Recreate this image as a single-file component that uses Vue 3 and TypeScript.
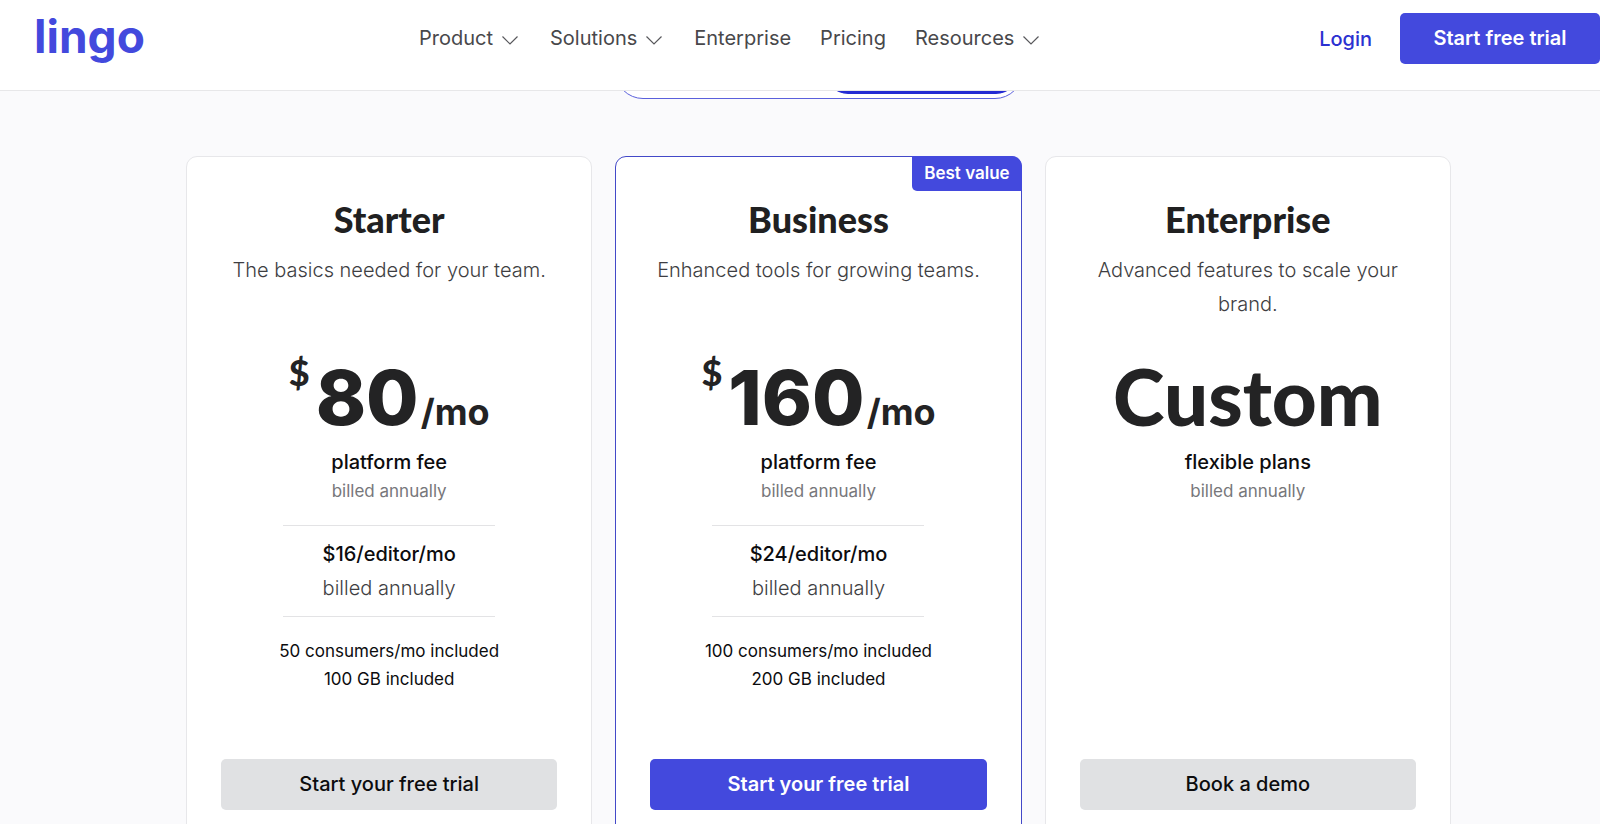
<script setup lang="ts">
interface NavItem {
  label: string
  menu: boolean
}

interface Plan {
  name: string
  description: string
  amount: string
  monthly: boolean
  fee: string
  editor?: string
  included?: string[]
  cta: string
  featured: boolean
}

const nav: NavItem[] = [
  { label: 'Product', menu: true },
  { label: 'Solutions', menu: true },
  { label: 'Enterprise', menu: false },
  { label: 'Pricing', menu: false },
  { label: 'Resources', menu: true },
]

const plans: Plan[] = [
  {
    name: 'Starter',
    description: 'The basics needed for your team.',
    amount: '80',
    monthly: true,
    fee: 'platform fee',
    editor: '$16/editor/mo',
    included: ['50 consumers/mo included', '100 GB included'],
    cta: 'Start your free trial',
    featured: false,
  },
  {
    name: 'Business',
    description: 'Enhanced tools for growing teams.',
    amount: '160',
    monthly: true,
    fee: 'platform fee',
    editor: '$24/editor/mo',
    included: ['100 consumers/mo included', '200 GB included'],
    cta: 'Start your free trial',
    featured: true,
  },
  {
    name: 'Enterprise',
    description: 'Advanced features to scale your brand.',
    amount: 'Custom',
    monthly: false,
    fee: 'flexible plans',
    cta: 'Book a demo',
    featured: false,
  },
]
</script>

<template>
  <div class="page">
    <header class="header">
      <a class="logo" href="#">lingo</a>
      <nav class="nav">
        <template v-for="item in nav" :key="item.label">
          <button v-if="item.menu" type="button" class="nav-item">
            {{ item.label }}
            <svg class="chevron" viewBox="0 0 16 9" aria-hidden="true">
              <path d="M0.5 0.5 L8 8 L15.5 0.5" />
            </svg>
          </button>
          <a v-else href="#" class="nav-item">{{ item.label }}</a>
        </template>
      </nav>
      <div class="account">
        <a href="#" class="login">Login</a>
        <button type="button" class="button primary trial">Start free trial</button>
      </div>
    </header>

    <main class="content">
      <div class="toggle-strip">
        <div class="toggle"><span class="toggle-thumb"></span></div>
      </div>

      <div class="plans">
        <section v-for="plan in plans" :key="plan.name" class="card" :class="{ featured: plan.featured }">
          <span v-if="plan.featured" class="badge">Best value</span>
          <h2 class="name">{{ plan.name }}</h2>
          <p class="description">{{ plan.description }}</p>
          <div class="price">
            <span v-if="plan.monthly" class="currency">$</span>
            <span class="amount" :class="{ figure: plan.monthly }">{{ plan.amount }}</span>
            <span v-if="plan.monthly" class="period">/mo</span>
          </div>
          <p class="fee">{{ plan.fee }}</p>
          <p class="billed">billed annually</p>
          <div v-if="plan.editor" class="editor">
            <p class="editor-price">{{ plan.editor }}</p>
            <p class="editor-billed">billed annually</p>
          </div>
          <ul v-if="plan.included" class="included">
            <li v-for="line in plan.included" :key="line">{{ line }}</li>
          </ul>
          <button type="button" class="button cta" :class="plan.featured ? 'primary' : 'neutral'">
            {{ plan.cta }}
          </button>
        </section>
      </div>
    </main>
  </div>
</template>

<style>
body {
  margin: 0;
  background: #fafafc;
}
</style>

<style scoped>
.page {
  height: 100vh;
  overflow: hidden;
  background: #fafafc;
  color: #0c0c0e;
  font-family: Inter, 'Liberation Sans', sans-serif;
  font-size: 20px;
}

.page *,
.page *::before {
  box-sizing: border-box;
}

a {
  text-decoration: none;
}

button {
  font: inherit;
  border: 0;
  cursor: pointer;
}

.header {
  display: grid;
  grid-template-columns: 385px auto 1fr;
  align-items: start;
  height: 91px;
  padding-left: 34px;
  background: #fff;
  border-bottom: 1px solid #e7e7e9;
}

.logo {
  justify-self: start;
  padding-top: 4px;
  color: #4349dd;
  font-size: 46px;
  line-height: 64px;
  font-weight: 700;
}

.nav {
  display: flex;
  gap: 29px;
  padding-top: 21px;
}

.nav-item {
  display: flex;
  align-items: center;
  gap: 9px;
  padding: 0;
  background: none;
  color: #48484b;
  line-height: 34px;
}

.chevron {
  width: 16px;
  height: 9px;
  margin: 4px 3px 0 0;
  fill: none;
  stroke: #58585c;
  stroke-width: 1.2;
}

.account {
  display: flex;
  justify-content: flex-end;
  align-items: center;
  gap: 28px;
  padding-top: 13px;
}

.login {
  color: #2b31d1;
  font-weight: 500;
}

.button {
  height: 51px;
  padding: 0 0 2px;
  border-radius: 5px;
  font-weight: 500;
}

.primary {
  background: #4349dd;
  color: #fff;
  font-weight: 600;
}

.neutral {
  background: #e0e1e3;
  color: #0c0c0e;
}

.trial {
  width: 200px;
}

.content {
  padding: 0 149px 0 186px;
}

.toggle-strip {
  display: flex;
  justify-content: center;
  align-items: flex-end;
  height: 8px;
  margin-bottom: 57px;
  overflow: hidden;
}

.toggle {
  display: flex;
  flex: none;
  justify-content: flex-end;
  width: 408px;
  height: 56px;
  padding: 4px;
  background: #fff;
  border: 1px solid #5a60dc;
  border-radius: 28px;
}

.toggle-thumb {
  width: 192px;
  border-radius: 22px;
  background: #232bd3;
}

.plans {
  display: grid;
  grid-template-columns: repeat(3, 1fr);
  gap: 23px;
}

.card {
  position: relative;
  display: flex;
  flex-direction: column;
  align-items: center;
  padding: 42px 34px 48px;
  background: #fff;
  border: 1px solid #e7e7ea;
  border-radius: 11px;
  text-align: center;
}

.featured {
  border-color: #4349c8;
}

.badge {
  position: absolute;
  top: -1px;
  right: -1px;
  padding: 0 12px;
  border-radius: 0 10px 0 5px;
  background: #4349dd;
  color: #fff;
  font-size: 17px;
  line-height: 35px;
  font-weight: 600;
}

.name {
  margin: 0 0 14px;
  color: #202021;
  font-family: Lato, 'Open Sans', sans-serif;
  font-size: 36px;
  line-height: 40px;
  font-weight: 900;
}

.description {
  min-height: 68px;
  margin: 0 0 31px;
  color: #3e3e42;
  font-weight: 300;
  line-height: 34px;
}

.price {
  display: flex;
  align-items: baseline;
  height: 88px;
  margin-bottom: 8px;
  color: #232324;
  font-family: Lato, 'Open Sans', sans-serif;
  font-weight: 900;
}

.currency {
  align-self: flex-start;
  margin-right: 6px;
  font-size: 36px;
  line-height: 40px;
}

.amount {
  font-size: 78px;
  line-height: 88px;
}

.figure,
.period {
  font-family: Inter, 'Open Sans', sans-serif;
}

.figure {
  font-size: 76px;
  line-height: 90px;
  font-weight: 800;
}

.period {
  margin-left: 2px;
  font-size: 36px;
  line-height: 40px;
  font-weight: 700;
}

.fee,
.billed {
  margin: 0;
  line-height: 28px;
}

.fee {
  font-weight: 500;
}

.billed {
  margin: 1px 0 20px;
  color: #77777b;
  font-size: 17px;
}

.editor {
  width: 212px;
  padding: 11px 0;
  border-top: 1px solid #e3e3e5;
  border-bottom: 1px solid #e3e3e5;
}

.editor p {
  margin: 0;
  line-height: 34px;
}

.editor .editor-price {
  font-weight: 500;
}

.editor .editor-billed {
  color: #3e3e42;
  font-weight: 300;
}

.included {
  margin: 20px 0 66px;
  padding: 0;
  list-style: none;
  font-size: 17px;
  line-height: 28px;
}

.cta {
  width: 100%;
  margin-top: auto;
}
</style>
